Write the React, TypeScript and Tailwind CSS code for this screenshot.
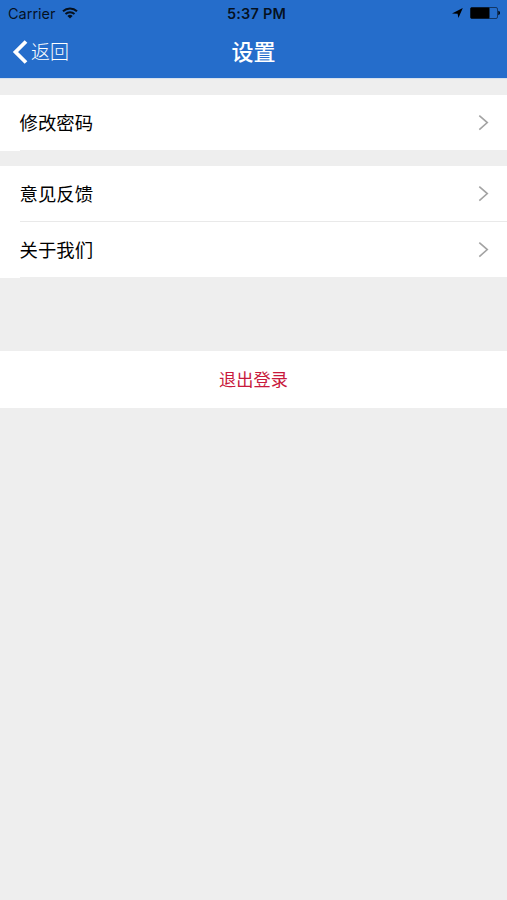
import { clsx } from 'clsx'

type Row = { id: string; label: string }

const GROUPS: Row[][] = [
  [{ id: 'password', label: '修改密码' }],
  [
    { id: 'feedback', label: '意见反馈' },
    { id: 'about', label: '关于我们' },
  ],
]

/* Status Bar */
function StatusBar() {
  return (
    <div className="grid h-7 grid-cols-3 items-center px-2 text-black/85">
      <div className="flex items-center gap-1.5">
        <span className="text-[14.5px] leading-7">Carrier</span>
        <svg className="mb-0.5" width="16" height="12" viewBox="0 0 16 12" fill="none">
          <path d="M1 4.3a10.2 10.2 0 0 1 14 0" stroke="currentColor" strokeWidth="2" />
          <path d="M3.5 7a6.6 6.6 0 0 1 9 0" stroke="currentColor" strokeWidth="1.9" />
          <path d="M8 11.6 5.4 8.9a3.8 3.8 0 0 1 5.2 0Z" fill="currentColor" />
        </svg>
      </div>
      <span className="pl-1.5 text-center text-[14.5px] font-semibold leading-7 tracking-[0.2px]">
        5:37 PM
      </span>
      <div className="-mr-0.5 mb-0.5 flex items-center justify-end gap-[7px]">
        <svg width="11" height="10" viewBox="0 0 11 10">
          <path d="M10.8 0 6.4 10 5.6 5.8 0 5.6Z" fill="black" />
        </svg>
        <svg width="31" height="12" viewBox="0 0 31 12">
          <rect x="0.5" y="0.5" width="27" height="11" rx="1.5" fill="none" stroke="black" strokeOpacity="0.5" />
          <rect x="0.5" y="0.5" width="19" height="11" rx="1" fill="black" />
          <path d="M28.3 3.8c2.2.4 2.2 4 0 4.4Z" fill="black" />
        </svg>
      </div>
    </div>
  )
}

/* Navigation Bar */
function NavBar() {
  return (
    <div className="grid h-[50px] grid-cols-3 items-center px-3 pb-0.5 text-white">
      <button className="flex items-center gap-[3px]">
        <svg width="16" height="26" viewBox="0 0 16 26" fill="none">
          <path d="M14 2.5 3.5 13 14 23.5" stroke="currentColor" strokeWidth="3.8" />
        </svg>
        <span className="pt-0.5 text-[19px] font-light leading-6">返回</span>
      </button>
      <h1 className="text-center text-[22px] font-medium leading-8">设置</h1>
    </div>
  )
}

function SettingsRow({ label, last }: { label: string; last: boolean }) {
  return (
    <li className="bg-white pl-5">
      <button
        className={clsx(
          'flex h-14 w-full items-center justify-between border-b pr-[18px]',
          last ? 'border-[#eeeeee]' : 'border-[#e9e9e9]',
        )}
      >
        <span className="-ml-[0.5px] text-[18.4px] leading-6">{label}</span>
        <svg width="11" height="16" viewBox="0 0 11 16" fill="none">
          <path d="M1.3.6 9.3 7.6l-8 7" stroke="#a3a3a3" strokeWidth="1.6" />
        </svg>
      </button>
    </li>
  )
}

export default function App() {
  return (
    <div className="min-h-screen bg-[#eeeeee] font-['Inter','Noto_Sans_CJK_SC',sans-serif] text-black">
      <header className="bg-[#256dcb]">
        <StatusBar />
        <NavBar />
      </header>

      {/* Settings Groups */}
      <main className="flex flex-col border-t border-[#d5e0ee] pt-4">
        <div className="flex flex-col gap-[15px]">
          {GROUPS.map((rows) => (
            <ul key={rows[0].id}>
              {rows.map((row, i) => (
                <SettingsRow key={row.id} label={row.label} last={i === rows.length - 1} />
              ))}
            </ul>
          ))}
        </div>

        {/* Logout */}
        <button className="mt-[73px] h-[57px] w-full bg-white text-[17.2px] leading-6 text-[#c8193c]">
          退出登录
        </button>
      </main>
    </div>
  )
}
